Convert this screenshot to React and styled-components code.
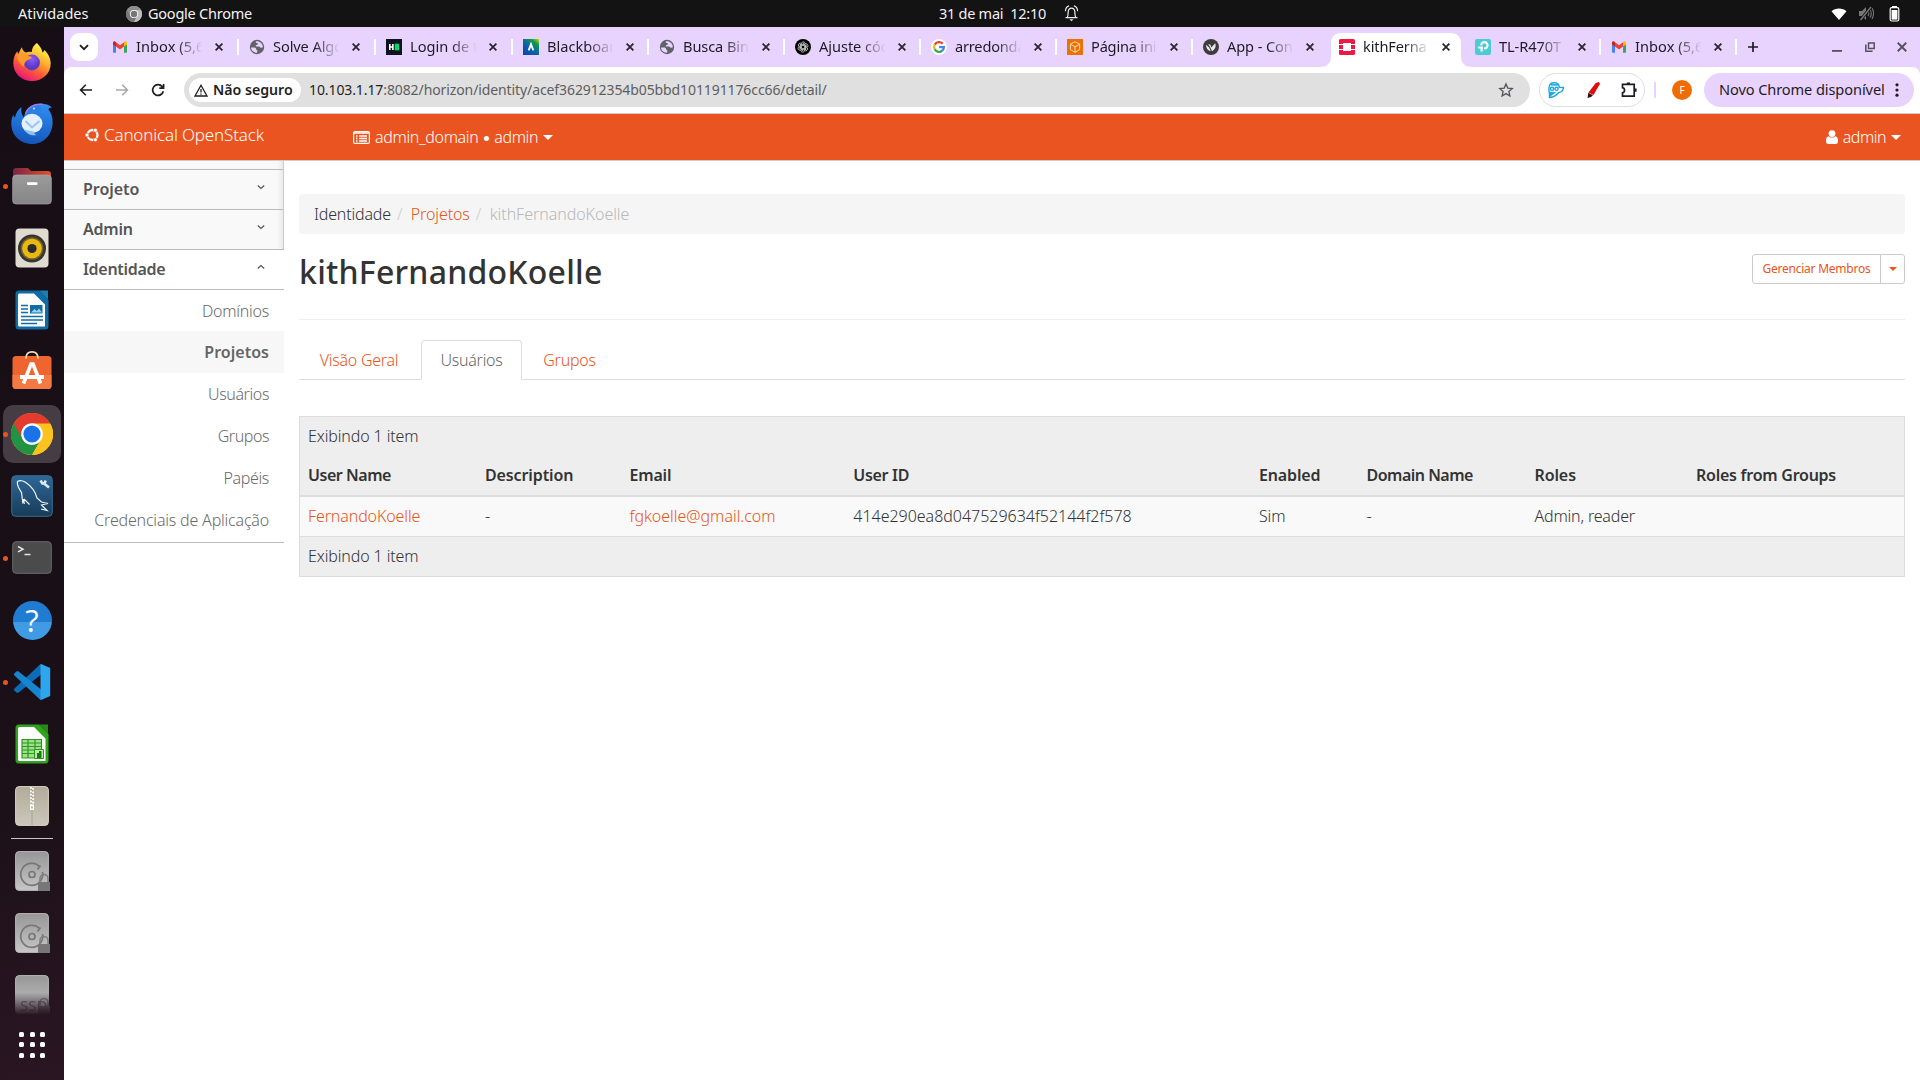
import React from 'react';
import styled, { createGlobalStyle, css } from 'styled-components';

const GlobalStyle = createGlobalStyle`
  *, *::before, *::after { box-sizing: border-box; }
  body { margin: 0; background: #fff; overflow: hidden; }
  body, button { font-family: "Noto Sans", "Open Sans", sans-serif; }
  svg { display: block; flex: none; }
`;

/* ---------- desktop shell ---------- */

const Desktop = styled.div`
  display: flex;
  flex-direction: column;
  width: 1920px;
  height: 1080px;
  overflow: hidden;
`;

const SystemBar = styled.header`
  display: grid;
  grid-template-columns: 1fr auto 1fr;
  align-items: center;
  height: 27px;
  padding: 0 18px;
  background: #131313;
  color: #f2f2f2;
  font-size: 14.5px;
  line-height: 24px;
  white-space: pre;
`;

const SystemLeft = styled.div`
  display: flex;
  align-items: center;
  gap: 6px;
  span { margin-top: -2px; }
`;

const Activities = styled.span`
  width: 102px;
`;

const AppLabel = styled.span`
  letter-spacing: -0.24px;
`;

const Clock = styled.div`
  display: flex;
  align-items: center;
  gap: 18px;
  letter-spacing: -0.26px;
  transform: translateX(48.5px);
  span { margin-top: -2px; }
`;

const Tray = styled.div`
  display: flex;
  align-items: center;
  justify-content: flex-end;
  gap: 12px;
`;

const Body = styled.div`
  display: flex;
  flex: 1;
  min-height: 0;
`;

const Dock = styled.nav`
  display: flex;
  flex-direction: column;
  align-items: center;
  width: 64px;
  padding-top: 4px;
  background: linear-gradient(168deg, #170d14 0%, #190f17 55%, #1d1119 75%, #2a1623 100%);
`;

const DockItem = styled.div`
  display: grid;
  place-items: center;
  position: relative;
  width: 58px;
  height: 58px;
  margin: 2px 0;
  border-radius: 10px;
  background: ${(p) => (p.$active ? '#453d43' : 'transparent')};
  ${(p) =>
    p.$running &&
    css`
      &::before {
        content: '';
        position: absolute;
        left: 0;
        top: 27px;
        width: 5px;
        height: 5px;
        border-radius: 50%;
        background: #e95420;
      }
    `}
`;

const DockDivider = styled.div`
  width: 42px;
  height: 1px;
  margin: 1px 0 1px;
  background: #c9c5c8;
`;

const DockClip = styled.div`
  height: 52px;
  overflow: hidden;
  mask-image: linear-gradient(#000 55%, transparent 98%);
`;

const AppsGrid = styled.div`
  display: grid;
  grid-template-columns: repeat(3, 5px);
  gap: 5.5px;
  margin-top: 15.5px;
`;

const GridDot = styled.i`
  height: 5px;
  border-radius: 1.6px;
  background: #fff;
`;

/* ---------- browser ---------- */

const Browser = styled.div`
  display: flex;
  flex-direction: column;
  flex: 1;
  min-width: 0;
  background: #e8d3ff;
`;

const TabStrip = styled.div`
  display: flex;
  align-items: center;
  height: 40px;
  padding-left: 6px;
  color: #1f1b24;
`;

const TabSearch = styled.button`
  display: grid;
  place-items: center;
  width: 28px;
  height: 28px;
  margin-right: 4px;
  padding: 0;
  border: 0;
  border-radius: 9px;
  background: #fff;
`;

const Tab = styled.div`
  display: flex;
  align-items: center;
  position: relative;
  align-self: stretch;
  width: ${(p) => (p.$wide ? 137 : 136)}px;
  padding-left: 10px;
  ${(p) =>
    p.$separator &&
    css`
      &::after {
        content: '';
        position: absolute;
        right: 0;
        top: 12px;
        width: 2px;
        height: 16px;
        background: #fff;
      }
    `}
`;

const ActiveShape = styled.svg`
  position: absolute;
  left: -8px;
  top: 6px;
`;

const Favicon = styled.span`
  position: relative;
  width: 16px;
  height: 16px;
  flex: none;
`;

const TabTitle = styled.span`
  position: relative;
  width: 68px;
  margin: -2px 11px 0 8px;
  overflow: hidden;
  font-size: 14.6px;
  line-height: 22px;
  letter-spacing: ${(p) => p.$spacing}px;
  white-space: nowrap;
  mask-image: linear-gradient(90deg, #000 60%, transparent 98%);
`;

const CloseMark = styled.svg`
  position: relative;
`;

const NewTab = styled.svg`
  margin-left: 11px;
`;

const WindowButtons = styled.div`
  display: flex;
  align-items: center;
  gap: 22.500px;
  margin-left: auto;
  margin-right: 13px;
`;

const Toolbar = styled.div`
  display: flex;
  align-items: center;
  height: 47px;
  padding: 0 6px 0 14px;
  border-radius: 8px 8px 0 0;
  border-bottom: 1px solid #d0ccd2;
  background: #fff;
`;

const NavButtons = styled.div`
  display: flex;
  gap: 20px;
  width: 106px;
`;

const AddressBar = styled.div`
  display: flex;
  align-items: center;
  width: 1346px;
  height: 34px;
  padding: 0 16px 0 5px;
  border-radius: 17px;
  background: #e0e0e0;
`;

const SecurityChip = styled.div`
  display: flex;
  align-items: center;
  gap: 5px;
  width: 112px;
  height: 24px;
  padding-left: 5px;
  border-radius: 12px;
  background: #fff;
  color: #1f1f1f;
  font-size: 14.2px;
  font-weight: 600;
  letter-spacing: -0.02px;
  line-height: 21px;
  span { margin-top: -2px; }
`;

const Url = styled.div`
  flex: 1;
  margin: -2px 0 0 8px;
  color: #5e5e5e;
  font-size: 14px;
  letter-spacing: -0.1px;
  strong {
    color: #1f1f1f;
    font-weight: 400;
  }
`;

const Extensions = styled.div`
  display: flex;
  align-items: center;
  justify-content: space-between;
  width: 106px;
  height: 34px;
  margin-left: 9px;
  padding: 0 6px 0 7px;
  border: 1px solid #e1dde4;
  border-radius: 17px;
`;

const ToolbarDivider = styled.i`
  width: 2px;
  height: 16px;
  margin: 0 16px 0 9px;
  background: #e8d3ff;
`;

const Avatar = styled.div`
  display: grid;
  place-items: center;
  width: 20px;
  height: 20px;
  border-radius: 50%;
  background: #ef6c00;
  color: #fff;
  font-size: 10px;
`;

const UpdateButton = styled.button`
  display: flex;
  align-items: center;
  justify-content: space-between;
  width: 210px;
  height: 34px;
  margin-left: 12px;
  padding: 0 15px 0 15px;
  border: 0;
  border-radius: 17px;
  background: #e8d3ff;
  color: #1f1b24;
  font-size: 14.6px;
  letter-spacing: -0.1px;
  white-space: nowrap;
  span { margin-top: -2px; }
`;

/* ---------- page ---------- */

const Page = styled.div`
  display: flex;
  flex-direction: column;
  flex: 1;
  min-height: 0;
  background: #fff;
  color: #333;
  font-size: 16px;
  font-weight: 300;
  line-height: 23px;
`;

const Navbar = styled.div`
  display: flex;
  align-items: center;
  height: 47px;
  padding: 0 19px 0 21px;
  border-bottom: 1px solid #ccc;
  background: #e95420;
  color: #fff;
`;

const Brand = styled.div`
  display: flex;
  align-items: center;
  gap: 5px;
  width: 268px;
  margin-top: -5px;
  font-size: 17px;
  letter-spacing: -0.16px;
`;

const NavMenu = styled.div`
  display: flex;
  align-items: center;
  gap: 5px;
  margin-left: ${(p) => (p.$end ? 'auto' : 0)};
  letter-spacing: ${(p) => (p.$end ? -0.5 : -0.35)}px;
  white-space: pre;
`;

const Bullet = styled.b`
  font-family: Inter, sans-serif;
  font-weight: 500;
`;

const Caret = styled.i`
  width: 0;
  border: ${(p) => p.$size}px solid transparent;
  border-top-color: currentColor;
  border-bottom: 0;
`;

const Content = styled.div`
  display: flex;
  flex: 1;
`;

const Sidebar = styled.aside`
  width: 220px;
`;

const shadedPanel = css`
  border-right: 1px solid #ccc;
  background: linear-gradient(270deg, #e9e9e9 0, #f9f9f9 6px);
`;

const SidebarTop = styled.div`
  height: 9px;
  ${shadedPanel}
  border-bottom: 1px solid #bbb;
`;

const SidebarHeading = styled.div`
  display: flex;
  align-items: center;
  justify-content: space-between;
  height: 40px;
  padding: 0 ${(p) => (p.$open ? 19 : 18)}px 0 19px;
  ${(p) => !p.$open && shadedPanel}
  border-bottom: 1px solid #bbb;
  color: #555;
  font-weight: 600;
  letter-spacing: ${(p) => p.$spacing}px;
  svg { margin-top: -6px; }
`;

const SidebarList = styled.ul`
  margin: 0;
  padding: 0;
  list-style: none;
  border-bottom: 1px solid #bbb;
`;

const SidebarItem = styled.li`
  height: 42px;
  padding-right: 15px;
  line-height: 42px;
  text-align: right;
  color: ${(p) => (p.$active ? '#666' : '#6a6a6a')};
  font-weight: ${(p) => (p.$active ? 600 : 300)};
  background: ${(p) => (p.$active ? '#f7f7f7' : 'transparent')};
  letter-spacing: ${(p) => p.$spacing || -0.25}px;
  &:first-child { height: 41px; }
  &:last-child { height: 43px; }
`;

const Main = styled.main`
  flex: 1;
  padding: 33px 15px 0;
`;

const Breadcrumb = styled.div`
  display: flex;
  height: 40px;
  padding-left: 15px;
  border-radius: 4px;
  background: #f5f5f5;
  line-height: 41px;
`;

const Crumb = styled.span`
  color: ${(p) => (p.$link ? '#e95420' : p.$current ? '#b8b8b8' : '#333')};
  letter-spacing: ${(p) => (p.$current ? -0.05 : p.$link ? -0.1 : -0.18)}px;
  &:not(:last-child)::after {
    content: '/';
    padding: 0 8.500px 0 6px;
    color: #ccc;
  }
`;

const TitleRow = styled.div`
  display: flex;
  justify-content: space-between;
  height: 86px;
  padding-top: 20px;
  border-bottom: 1px solid #eee;
`;

const Title = styled.h1`
  margin: -1px 0 0;
  font-size: 32px;
  font-weight: 500;
  line-height: 37px;
  letter-spacing: 0.24px;
`;

const ButtonGroup = styled.div`
  display: flex;
  width: 153px;
  height: 30px;
  border: 1px solid #ccc;
  border-radius: 3px;
  color: #e95420;
  font-size: 12px;
  font-weight: 400;
  line-height: 28px;
`;

const GroupButton = styled.div`
  display: flex;
  align-items: center;
  justify-content: center;
  width: 128px;
  letter-spacing: -0.25px;
  border-right: 1px solid #ccc;
`;

const GroupToggle = styled.div`
  display: grid;
  place-items: center;
  flex: 1;
`;

const Tabs = styled.div`
  display: flex;
  height: 40px;
  margin-top: 20px;
  border-bottom: 1px solid #ddd;
`;

const PageTab = styled.div`
  height: 40px;
  width: ${(p) => p.$width}px;
  margin-right: 2px;
  border: 1px solid ${(p) => (p.$active ? '#ddd' : 'transparent')};
  border-bottom-color: ${(p) => (p.$active ? '#fff' : 'transparent')};
  border-radius: 4px 4px 0 0;
  color: ${(p) => (p.$active ? '#666' : '#e95420')};
  text-align: center;
  line-height: 38px;
  letter-spacing: -0.25px;
`;

const Table = styled.div`
  margin-top: 36px;
  border: 1px solid #ddd;
  background: #eee;
`;

const TableNote = styled.div`
  height: 39px;
  padding-left: 8px;
  line-height: 39px;
  letter-spacing: -0.12px;
`;

const TableRow = styled.div`
  display: grid;
  grid-template-columns: 177px 144.500px 223.800px 405.700px 107.500px 168px 161.500px 1fr;
  height: ${(p) => (p.$head ? 41 : 40)}px;
  padding-left: 8px;
  line-height: 39px;
  ${(p) =>
    p.$head
      ? css`
          border-bottom: 2px solid #ddd;
          font-weight: 600;
        `
      : css`
          border-bottom: 1px solid #ddd;
          background: #f9f9f9;
        `}
`;

const Cell = styled.span`
  color: ${(p) => (p.$link ? '#e95420' : '#333')};
  letter-spacing: ${(p) => p.$spacing || 0}px;
`;

/* ---------- small drawings ---------- */

const CloseIcon = ({ size = 8, stroke = '#2b2530', width = 1.8 }) => (
  <CloseMark width={size} height={size} viewBox="0 0 8 8">
    <path d="M.6.6 7.4 7.4M7.4.6.6 7.4" stroke={stroke} strokeWidth={width} />
  </CloseMark>
);

const Gmail = () => (
  <svg width="16" height="16" viewBox="0 0 16 16">
    <path d="M1 4.5V13a.8.8 0 0 0 .8.8H4V7z" fill="#4285f4" />
    <path d="M15 4.5V13a.8.8 0 0 1-.8.8H12V7z" fill="#34a853" />
    <path d="M12 3.3V7.6l3-2.2V4c0-1.5-1.6-2.2-2.7-1.3z" fill="#fbbc04" />
    <path d="M4 7.6V3.3l4 3 4-3v4.3l-4 3z" fill="#ea4335" />
    <path d="M1 4v1.4l3 2.2V3.3l-.7-.6C2.300 1.800 1 2.500 1 4z" fill="#c5221f" />
  </svg>
);

const Globe = () => (
  <svg width="16" height="16" viewBox="0 0 16 16">
    <circle cx="8" cy="8" r="7.200" fill="#5f6368" />
    <path d="M2 8.600c2 0 2.600-.6 4.300.2 1.200.8.3 1.700 1.400 2.100 1 .3.800 1 .3 2.800C4.700 13.900 2.100 11.700 2 8.600zM6.800 2.300c-.2 1.500.3 1.800 1.600 1.900 1.200.2.300 1.500-.6 1.700-1.300.2-1.500 1.500-.2 1.700 1.600.1 2.500-.3 3.500.6.900.9 1.900.3 2.700.1.300-3.800-3.500-6.700-7-6z" fill="#e8d3ff" />
  </svg>
);

const HackerRank = () => (
  <svg width="16" height="16" viewBox="0 0 16 16">
    <path fill="#0e141e" d="M0 0h16v16H0z" />
    <path fill="#fff" d="M3 5h1.600v2.200h1.500V5h1.600v6H6.100V8.700H4.600V11H3z" />
    <path fill="#05d96f" d="M8.700 4.700h4.500v6.600H8.700z" />
  </svg>
);

const Blackboard = () => (
  <svg width="16" height="16" viewBox="0 0 16 16">
    <defs>
      <linearGradient id="bb" x1="1" y1="0" x2=".2" y2="1">
        <stop offset="0" stopColor="#c8dc10" />
        <stop offset=".25" stopColor="#109a48" />
        <stop offset=".6" stopColor="#0a63a8" />
        <stop offset="1" stopColor="#0a48b0" />
      </linearGradient>
    </defs>
    <path fill="url(#bb)" d="M0 0h16v16H0z" />
    <path d="M5.700 11.300 8 5.200l2.300 6.100" fill="none" stroke="#fff" strokeWidth="1.900" />
  </svg>
);

const OpenAI = () => (
  <svg width="16" height="16" viewBox="0 0 16 16">
    <circle cx="8" cy="8" r="8" fill="#000" />
    <g fill="none" stroke="#ddd" strokeWidth=".8">
      {[0, 60, 120, 180, 240, 300].map((a) => (
        <path key={a} transform={`rotate(${a} 8 8)`} d="M6.300 8.900V5a2.100 2.100 0 0 1 3.900-1.100M6.300 5.900l3.200-1.800" />
      ))}
    </g>
  </svg>
);

const Google = () => (
  <svg width="16" height="16" viewBox="0 0 16 16">
    <circle cx="8" cy="8" r="8" fill="#fff" />
    <g fill="none" strokeWidth="2.300">
      <path d="M11.700 4.800A4.900 4.900 0 0 0 3.700 5.700" stroke="#ea4335" />
      <path d="M3.800 5.500a4.900 4.900 0 0 0 0 5" stroke="#fbbc05" />
      <path d="M3.700 10.300a4.900 4.900 0 0 0 7.600 1.300" stroke="#34a853" />
      <path d="M11.200 11.700a4.600 4.600 0 0 0 1.700-3.500H8.100" stroke="#4285f4" />
    </g>
  </svg>
);

const Cube = () => (
  <svg width="16" height="16" viewBox="0 0 16 16">
    <path fill="#ed7100" d="M0 0h16v16H0z" />
    <path d="M8 2.700 12.600 5.200v5.500L8 13.300 3.400 10.700V5.200zM3.400 5.200 8 7.800l4.600-2.600M8 7.800v5.500" fill="none" stroke="#ffe5cc" strokeWidth=".9" />
  </svg>
);

const Katalon = () => (
  <svg width="16" height="16" viewBox="0 0 16 16">
    <circle cx="8" cy="8" r="8" fill="#3c3c3c" />
    <path d="M3 5.800 6.200 8.500l1.500 3.700C5 11.800 3 9.500 3 5.800zM5.200 5 7.500 5.800l.8 2.700 3.900-4.300c1.300 3-.2 6.500-3.200 8L7.300 8.500z" fill="#e8e8e8" />
  </svg>
);

const OpenStackMark = () => (
  <svg width="16" height="16" viewBox="0 0 16 16">
    <path fill="#ed1944" d="M1.500 0h13A1.500 1.500 0 0 1 16 1.500V5h-4V4H4v1H0V1.500A1.500 1.500 0 0 1 1.500 0zM0 6h4v4H0zM12 6h4v4h-4zM0 11h4v1h8v-1h4v3.500a1.500 1.500 0 0 1-1.500 1.500h-13A1.500 1.500 0 0 1 0 14.500z" />
  </svg>
);

const TpLink = () => (
  <svg width="16" height="16" viewBox="0 0 16 16">
    <rect width="16" height="16" rx="2" fill="#4acbd6" />
    <path d="M3.200 8.500H8M6.200 6.200a3.200 3.200 0 1 1 3.100 3.300H9M6.600 8v4.600" fill="none" stroke="#fff" strokeWidth="2.100" />
  </svg>
);

const ChromeDisc = ({ size, mono }) => {
  const [r, y, g, b] = mono ? ['#8d8d8d', '#bdbdbd', '#777', '#777'] : ['#e33b2e', '#fcc31e', '#229342', '#1a73e8'];
  return (
    <svg width={size} height={size} viewBox="0 0 42 42">
      <circle cx="21" cy="21" r="21" fill={y} />
      <path d="M21 21 2.800 10.500A21 21 0 0 0 21 42l9.100-15.800z" fill={g} />
      <path d="M21 42 30.100 26.200 39.200 10.500A21 21 0 0 1 21 42z" fill={y} />
      <path d="M21 10.500h18.200a21 21 0 0 0-36.400 0L11.900 26.200z" fill={r} />
      <circle cx="21" cy="21" r="10.800" fill="#fff" />
      <circle cx="21" cy="21" r="8.600" fill={b} />
    </svg>
  );
};

const Bell = () => (
  <svg width="14" height="17" viewBox="0 0 14 17" fill="none" stroke="#eee" strokeWidth="1.200">
    <path d="M1 12.600h12M2.700 12.400c1.200-1.700.7-3.800 1-5.900C4 4.300 5.200 3.200 7 3.200s3 1.100 3.300 3.300c.3 2.100-.2 4.200 1 5.900M.9 6.300C1 3.300 2.300 1.300 4.600.800M13.100 6.300c-.1-3-1.400-5-3.700-5.500" />
    <path d="M5 14.200h4L7 16.200z" fill="#eee" stroke="none" />
  </svg>
);

/* ---------- dock drawings ---------- */

const Firefox = () => (
  <svg width="40" height="40" viewBox="0 0 40 40">
    <defs>
      <linearGradient id="ff" x1=".8" y1=".1" x2=".3" y2="1">
        <stop offset="0" stopColor="#fff44f" />
        <stop offset=".35" stopColor="#ffb02e" />
        <stop offset=".65" stopColor="#ff5a36" />
        <stop offset="1" stopColor="#e3127e" />
      </linearGradient>
      <radialGradient id="ffg" cx=".5" cy=".3">
        <stop offset="0" stopColor="#9059ff" />
        <stop offset="1" stopColor="#5b3bc4" />
      </radialGradient>
    </defs>
    <path d="M25 1c3 3.500 5 6 5.500 9.500 1-.3 1.500-1.500 1.800-2.500C36 11.500 38.700 16 38.700 21.500 38.700 31.500 30.500 39 20 39S1.300 31.500 1.300 21c0-5 1.700-9 4-11.700l.8 3C7.500 9.500 9 6.500 9.800 5.200c.6 2.500 2 4.300 4.200 5.300 2-.8 4-.9 6-.5C19.700 6 22 3 25 1z" fill="url(#ff)" />
    <circle cx="20" cy="20.500" r="7.900" fill="url(#ffg)" />
    <path d="M5.500 12.500c3-2 6-1.800 8.500-.3 1.800 1.500 3.500 2 6 2.800-1 2.500-4 2.500-5.500 3.800-1.500 1.600-3 3.200-2.500 6C8.500 23 4.500 18 5.500 12.500z" fill="#ff9a2e" />
  </svg>
);

const Thunderbird = () => (
  <svg width="44" height="44" viewBox="0 0 44 44">
    <defs>
      <linearGradient id="tb" x1=".5" y1="0" x2=".3" y2="1">
        <stop offset="0" stopColor="#2f8cf0" />
        <stop offset="1" stopColor="#1353b8" />
      </linearGradient>
    </defs>
    <path d="M42 5.500c-3 .4-3.700 1.200-3.500 2 2.700 3.500 4.400 8 4.100 13.500C42.200 33 33.500 42 22.500 42 10 42 1 33 1.300 21c0-2.800.8-6 2-8.500.3 1.800.8 2.500 1.600 3C6 11 8.200 7.300 11.500 5c-.7 4.500 0 7.500 2.500 10.500L20 11C22 5 26.500 1.500 31.500 1.800c4 .2 7.500.8 10.500 3.700z" fill="url(#tb)" />
    <path d="M14 15.500C15 7 20 2 31.500 1.800L30 12z" fill="#2b80e4" />
    <path d="M15.500 11.500C18.500 5 25 1.500 33 2.500" fill="none" stroke="#9a7bea" strokeWidth="1.400" />
    <ellipse cx="22" cy="21.500" rx="10.500" ry="9.700" fill="#e3f0fd" />
    <path d="M14 27.500c3 5 8 6.500 12.500 5.500-2-1-2.800-2-3-3.500z" fill="#8fc3f8" />
    <path d="M15.500 19 22 25.500l7.500-6.500" fill="none" stroke="#9cc3ec" strokeWidth="1.800" />
    <circle cx="24" cy="6.500" r="1" fill="#cfe4ff" />
  </svg>
);

const Files = () => (
  <svg width="40" height="38" viewBox="0 0 40 38">
    <defs>
      <linearGradient id="fo">
        <stop offset="0" stopColor="#7a2545" />
        <stop offset="1" stopColor="#e2502a" />
      </linearGradient>
      <linearGradient id="fg" x2="0" y2="1">
        <stop offset="0" stopColor="#9b9b9b" />
        <stop offset="1" stopColor="#858585" />
      </linearGradient>
    </defs>
    <path d="M1 4a3 3 0 0 1 3-3h12l3 3h17a3 3 0 0 1 3 3v10H1z" fill="url(#fo)" />
    <rect x=".6" y="8" width="38.800" height="29" rx="3.500" fill="url(#fg)" stroke="#ababab" strokeWidth=".6" />
    <rect x="15" y="15.300" width="10.500" height="2.600" rx=".8" fill="#fff" />
  </svg>
);

const Speaker = () => (
  <svg width="34" height="40" viewBox="0 0 34 40">
    <rect x=".5" y=".5" width="33" height="39" rx="4" fill="#dfdbd0" />
    <circle cx="17" cy="20.500" r="14" fill="#36352f" />
    <circle cx="17" cy="20.500" r="11.300" fill="#77622a" />
    <circle cx="17" cy="20.500" r="9.800" fill="#e9b912" />
    <circle cx="17" cy="20.500" r="4.600" fill="#2b2b2b" />
  </svg>
);

const Writer = () => (
  <svg width="34" height="40" viewBox="0 0 34 40">
    <path d="M4 .5h20L33.500 10v26a3.500 3.500 0 0 1-3.500 3.500H4A3.500 3.500 0 0 1 .5 36V4A3.500 3.500 0 0 1 4 .5z" fill="#0f6ca5" />
    <path d="M4.500 3.500H19L30 14.500V36.500H4.500A1.500 1.500 0 0 1 3 35V5a1.500 1.500 0 0 1 1.500-1.500z" fill="#fff" />
    <path d="M24 .5h9v9z" fill="#1b7fb5" />
    <path d="M6 15.500h7M6 19h7M6 22.500h7M6 26.500h22M6 30h22M6 33.500h16" stroke="#0f6ca5" strokeWidth="1.500" />
    <path d="M15 15h12.500v8.500H15z" fill="#0f6ca5" />
    <path d="m16 22.500 3.500-3.500 2.500 2 2-2.500 3 4z" fill="#9fd0ee" />
  </svg>
);

const Software = () => (
  <svg width="40" height="45" viewBox="0 0 40 45">
    <rect x=".5" y="6" width="39" height="33" rx="3.500" fill="#f0642f" />
    <path d="M.5 25h39v10.500a3.500 3.500 0 0 1-3.500 3.500H4a3.500 3.500 0 0 1-3.500-3.500z" fill="#f47a45" />
    <path d="M14 8.500C14 4 16.300 1.800 20 1.800S26 4 26 8.500" fill="none" stroke="#f6dcae" strokeWidth="1.800" />
    <path d="M11.500 33.500 19 14h2l7.500 19.500" fill="none" stroke="#fff" strokeWidth="3.600" />
    <path d="M8 27h24" stroke="#fff" strokeWidth="4" />
  </svg>
);

const Workbench = () => (
  <svg width="42" height="42" viewBox="0 0 42 42">
    <defs>
      <linearGradient id="wb" x2="0" y2="1">
        <stop offset="0" stopColor="#2f6797" />
        <stop offset="1" stopColor="#173c59" />
      </linearGradient>
    </defs>
    <rect x=".7" y=".7" width="40.600" height="40.600" rx="4" fill="url(#wb)" stroke="#3b6a90" />
    <path d="M6.500 6.500c2-1.500 6-1 9 1.500 6 4 9 9.500 10.500 15l4.500 4 6.500 1.500-6.500 1.500 5.500 5.500-6-1.500M6.500 6.500c-1 4 2 8 4 11l1.300 10 1.700-3 5 5M12.500 24l.8 5" fill="none" stroke="#eef5fa" strokeWidth="1.200" />
    <path d="m29.500 5.500 2 3 2.200-.5 1-2.500M33 8.500l5 4" fill="none" stroke="#dce9f2" strokeWidth="2.600" />
  </svg>
);

const Terminal = () => (
  <svg width="40" height="34" viewBox="0 0 40 34">
    <rect x=".7" y=".7" width="38.600" height="31.600" rx="3.500" fill="#4b4b4b" stroke="#6b6b6b" />
    <path d="m6 5.500 5 2.700-5 2.700M12.500 13.500h6" fill="none" stroke="#e6e6e6" strokeWidth="1.500" />
  </svg>
);

const HelpDisc = styled.div`
  display: grid;
  place-items: center;
  width: 39px;
  height: 39px;
  border-radius: 50%;
  background: linear-gradient(#1f7cd0 0 54%, #3f9be3 55%);
  color: #fff;
  font: 400 31px/37px "Open Sans", sans-serif;
`;

const VsCode = () => (
  <svg width="38" height="38" viewBox="0 0 38 38">
    <path d="M27.500 1 1.500 25.500c-.7.700-.7 1.500 0 2.200L3.500 29.500c.7.500 1.400.5 2.100 0L30 10z" fill="#0b6cb8" />
    <path d="M27.500 37 1.500 12.500c-.7-.7-.7-1.500 0-2.200L3.500 8.500c.7-.5 1.400-.5 2.100 0L30 28z" fill="#1686d0" />
    <path d="M27.500.8 37.200 5v28l-9.700 4.200z" fill="#2ea6ee" />
  </svg>
);

const Calc = () => (
  <svg width="34" height="40" viewBox="0 0 34 40">
    <path d="M4 .5h20L33.500 10v26a3.500 3.500 0 0 1-3.500 3.500H4A3.500 3.500 0 0 1 .5 36V4A3.500 3.500 0 0 1 4 .5z" fill="#2ea31c" />
    <path d="M4.500 3H19L30.500 14.500V37H4.500A1.500 1.500 0 0 1 3 35.500v-31A1.500 1.500 0 0 1 4.500 3z" fill="#fff" />
    <path d="M24 .5h9v9z" fill="#268a18" />
    <path d="M7 15.500h19.500V34H7z" fill="#9fdf8e" />
    <path d="M7 15.500h19.500V34H7zM7 19h19.500M7 22.500h19.500M7 26h19.500M7 29.500h19.500M13 15.500V34M20 15.500V34" fill="none" stroke="#2a9a1a" strokeWidth="1.200" />
    <path d="M19.500 25.500h9v9h-9z" fill="#b8ecaa" stroke="#2a9a1a" />
    <path d="M22 34v-5h2v-2h2.500v7z" fill="#1c7a10" />
  </svg>
);

const Archive = () => (
  <svg width="34" height="40" viewBox="0 0 34 40">
    <defs>
      <linearGradient id="az" x2="0" y2="1">
        <stop offset="0" stopColor="#b3ab9a" />
        <stop offset="1" stopColor="#cbc7ba" />
      </linearGradient>
    </defs>
    <rect x=".6" y=".6" width="32.800" height="38.800" rx="3.500" fill="url(#az)" stroke="#d8d4c8" />
    <path d="M17 1v38" stroke="#a39c8c" strokeWidth=".8" />
    <path d="M15.900 1v18M18.100 2v17" stroke="#fff" strokeWidth="1.800" strokeDasharray="1.800 1.600" />
    <path d="M15 18.500h4V24h-4z" fill="#fff" />
    <path d="M16.300 20.500h1.400v2h-1.400z" fill="#999" />
  </svg>
);

const DriveLabel = styled.div`
  position: absolute;
  left: 5px;
  top: 22px;
  color: #6e6e6e;
  font: 400 15px/16px "Noto Sans", sans-serif;
`;

const DriveBox = styled.div`
  position: relative;
  width: 36px;
  height: 40px;
  margin-left: 2px;
`;

const Drive = ({ label }) => (
  <DriveBox>
    <svg width="36" height="40" viewBox="0 0 36 40">
      <defs>
        <linearGradient id="dr" x2="0" y2="1">
          <stop offset="0" stopColor="#979797" />
          <stop offset="1" stopColor="#c6c6c6" />
        </linearGradient>
      </defs>
      <rect x=".6" y=".6" width="32.800" height="38.800" rx="3.500" fill="url(#dr)" stroke="#b8b8b8" />
      {!label && (
        <g fill="none" stroke="#777" strokeWidth="1.700">
          <path d="M24.500 15.500A11 11 0 1 0 27.500 21" />
          <circle cx="17" cy="23.500" r="3" />
          <path d="m22.500 18.500 3-4" />
        </g>
      )}
      <path d="M25 32v-4.500a4 4 0 0 1 8 0V32" fill="none" stroke="#808080" strokeWidth="1.600" />
      <path d="M23 31h12v9H23z" fill="#777" />
    </svg>
    {label && <DriveLabel>{label}</DriveLabel>}
  </DriveBox>
);

/* ---------- data ---------- */

const browserTabs = [
  { title: 'Inbox (5,6', icon: Gmail, sep: true, spacing: 0.05, wide: true },
  { title: 'Solve Algo', icon: Globe, sep: true, spacing: -0.1, wide: true },
  { title: 'Login de t', icon: HackerRank, sep: true, spacing: 0, wide: true },
  { title: 'Blackboar', icon: Blackboard, sep: true, spacing: 0 },
  { title: 'Busca Bin', icon: Globe, sep: true, spacing: -0.1 },
  { title: 'Ajuste cód', icon: OpenAI, sep: true, spacing: -0.05 },
  { title: 'arredonda', icon: Google, sep: true, spacing: -0.2 },
  { title: 'Página ini', icon: Cube, sep: true, spacing: -0.2 },
  { title: 'App - Con', icon: Katalon, spacing: -0.1 },
  { title: 'kithFerna', icon: OpenStackMark, active: true, spacing: -0.15 },
  { title: 'TL-R470T', icon: TpLink, sep: true, spacing: -0.1 },
  { title: 'Inbox (5,6', icon: Gmail, sep: true, spacing: 0.05 },
];

const dockApps = [
  { icon: <Firefox /> },
  { icon: <Thunderbird /> },
  { icon: <Files />, running: true },
  { icon: <Speaker /> },
  { icon: <Writer /> },
  { icon: <Software /> },
  { icon: <ChromeDisc size={42} />, running: true, active: true },
  { icon: <Workbench /> },
  { icon: <Terminal />, running: true },
  { icon: <HelpDisc>?</HelpDisc> },
  { icon: <VsCode />, running: true },
  { icon: <Calc /> },
  { icon: <Archive /> },
];

const menu = [
  { label: 'Domínios' },
  { label: 'Projetos', active: true, spacing: 0.02 },
  { label: 'Usuários', spacing: -0.4 },
  { label: 'Grupos', spacing: -0.45 },
  { label: 'Papéis', spacing: -0.35 },
  { label: 'Credenciais de Aplicação', spacing: -0.19 },
];

const columns = [
  ['User Name', -0.45],
  ['Description', -0.12],
  ['Email', -0.2],
  ['User ID', -0.3],
  ['Enabled', -0.15],
  ['Domain Name', -0.5],
  ['Roles', -0.1],
  ['Roles from Groups', -0.25],
];

const userRow = [
  { text: 'FernandoKoelle', link: true, spacing: -0.12 },
  { text: '-' },
  { text: 'fgkoelle@gmail.com', link: true, spacing: -0.02 },
  { text: '414e290ea8d047529634f52144f2f578', spacing: -0.02 },
  { text: 'Sim', spacing: -0.1 },
  { text: '-' },
  { text: 'Admin, reader', spacing: -0.18 },
  { text: '' },
];

const Chevron = ({ up }) => (
  <svg width="8" height="6" viewBox="0 0 8 6">
    <path d={up ? 'M.8 4.500 4 1.500l3.200 3' : 'M.8 1.500 4 4.500l3.200-3'} fill="none" stroke="#555" strokeWidth="1.200" />
  </svg>
);

export default function App() {
  return (
    <Desktop>
      <GlobalStyle />
      <SystemBar>
        <SystemLeft>
          <Activities>Atividades</Activities>
          <ChromeDisc size={16} mono />
          <AppLabel>Google Chrome</AppLabel>
        </SystemLeft>
        <Clock>
          <span>31 de mai  12:10</span>
          <Bell />
        </Clock>
        <Tray>
          <svg width="16" height="12" viewBox="0 0 16 12">
            <path d="M.5 3.200C4.500-.4 11.500-.4 15.500 3.200L8 12z" fill="#fff" />
          </svg>
          <svg width="15" height="15" viewBox="0 0 15 15" fill="none" stroke="#777">
            <path d="M0 5h3l4-4v13l-4-4H0z" fill="#777" stroke="none" />
            <path d="M9 5c1 1.500 1 3.500 0 5M11 3.500c1.600 2.500 1.600 5.500 0 8M13 2c2 3.500 2 7.500 0 11" strokeWidth="1.100" />
            <path d="M1.500 14 12 1" stroke="#131313" strokeWidth="3" />
            <path d="M1.500 14 12 1" strokeWidth="1.400" />
          </svg>
          <svg width="16" height="16" viewBox="0 0 16 16">
            <path d="M6 0h5v2H6z" fill="#fff" />
            <rect x="4.200" y="1.700" width="8.600" height="13.300" rx="1.500" fill="none" stroke="#fff" strokeWidth="1.200" />
            <path d="M5.600 4h5.800v9.600H5.600z" fill="#fff" />
          </svg>
        </Tray>
      </SystemBar>
      <Body>
        <Dock>
          {dockApps.map((d, i) => (
            <DockItem key={i} $running={d.running} $active={d.active}>
              {d.icon}
            </DockItem>
          ))}
          <DockDivider />
          <DockItem><Drive /></DockItem>
          <DockItem><Drive /></DockItem>
          <DockClip>
            <DockItem><Drive label="SSD" /></DockItem>
          </DockClip>
          <AppsGrid>
            {Array.from({ length: 9 }, (_, i) => <GridDot key={i} />)}
          </AppsGrid>
        </Dock>
        <Browser>
          <TabStrip>
            <TabSearch>
              <svg width="10" height="7" viewBox="0 0 10 7">
                <path d="m1 1.200 4 4 4-4" fill="none" stroke="#1f1f1f" strokeWidth="1.900" />
              </svg>
            </TabSearch>
            {browserTabs.map(({ title, icon: Icon, sep, active, spacing, wide }, i) => (
              <Tab key={i} $separator={sep} $wide={wide}>
                {active && (
                  <ActiveShape width="150" height="34" viewBox="0 0 150 34">
                    <path d="M0 34c6 0 10-4 10-10V10C10 4 14 0 20 0h110c6 0 10 4 10 10v14c0 6 4 10 10 10z" fill="#fff" />
                  </ActiveShape>
                )}
                <Favicon><Icon /></Favicon>
                <TabTitle $spacing={spacing}>{title}</TabTitle>
                <CloseIcon />
              </Tab>
            ))}
            <NewTab width="10" height="10" viewBox="0 0 10 10">
              <path d="M5 0v10M0 5h10" stroke="#1f1b24" strokeWidth="1.700" />
            </NewTab>
            <WindowButtons>
              <svg width="10" height="10" viewBox="0 0 10 10"><path d="M0 8.900h10" stroke="#55505c" strokeWidth="1.800" /></svg>
              <svg width="10" height="10" viewBox="0 0 10 10" fill="none" stroke="#55505c" strokeWidth="1.500">
                <path d="M3.500 1h5.700v5.500H3.500zM.8 2.500v6.700h6.800" />
              </svg>
              <CloseIcon size={10} stroke="#55505c" width={1.500} />
            </WindowButtons>
          </TabStrip>
          <Toolbar>
            <NavButtons>
              <svg width="16" height="16" viewBox="0 0 16 16" fill="none" stroke="#1f1f1f" strokeWidth="1.600"><path d="M14 8H3M7.800 2.800 2.600 8l5.200 5.200" /></svg>
              <svg width="16" height="16" viewBox="0 0 16 16" fill="none" stroke="#a8a8a8" strokeWidth="1.600"><path d="M2 8h11M8.200 2.800 13.400 8l-5.200 5.200" /></svg>
              <svg width="16" height="16" viewBox="0 0 16 16" fill="none" stroke="#1f1f1f" strokeWidth="1.700"><path d="M13.300 9.200A5.400 5.400 0 1 1 12.200 4.600L13.500 6M13.600 1.900V6.200H9.300" /></svg>
            </NavButtons>
            <AddressBar>
              <SecurityChip>
                <svg width="14" height="13" viewBox="0 0 14 13" fill="none" stroke="#1f1f1f" strokeWidth="1.300"><path d="M7 1.300 13 12H1zM7 5v3.600M7 9.400v1.300" /></svg>
                <span>Não seguro</span>
              </SecurityChip>
              <Url><strong>10.103.1.17</strong>:8082/horizon/identity/acef362912354b05bbd101191176cc66/detail/</Url>
              <svg width="16" height="16" viewBox="0 0 16 16"><path d="m8 1.900 1.800 4.200 4.500.4-3.400 3 1 4.500L8 11.600 4.100 14l1-4.500-3.400-3 4.500-.4z" fill="none" stroke="#55555a" strokeWidth="1.300" /></svg>
            </AddressBar>
            <Extensions>
              <svg width="18" height="18" viewBox="0 0 18 18" fill="#fff" stroke="#1da5e0" strokeWidth="1.400">
                <path d="M2 6.500C2.500 3 5 1.500 8 1.800c2.500.2 4 1.700 4.300 4.500L16.500 6.500c-.3 3-2 4.700-4.700 5-2 2.700-5 4.500-9.300 5C3 13 1.600 10.500 2 6.500z" />
                <path d="M4 3.900h7" strokeWidth="1.600" /><path d="M2.800 11.300h5.700l-5.500 4z" fill="#1da5e0" strokeWidth=".8" /><circle cx="5" cy="7.800" r="1.600" /><circle cx="9.500" cy="7.800" r="1.600" />
              </svg>
              <svg width="16" height="18" viewBox="0 0 16 18"><path d="M10.500 2.300 13.500 1c1 .4 1.600 1.200 1.200 2.300L8.500 14l-5-2.500z" fill="#e30a0a" /><path d="m3.300 11.800 4.700 2.400-2 1.700-3.500 1z" fill="#3a0f0f" /></svg>
              <svg width="18" height="18" viewBox="0 0 18 18" fill="none" stroke="#1f1b24" strokeWidth="1.700"><path d="M2.500 3.300h11.700v11.900H2.500v-3.300c2.700-.5 2.700-4.700 0-5.200z" /><path d="M6.800 2.800h3.200M15.300 7.600v3.200" strokeWidth="2.600" /></svg>
            </Extensions>
            <ToolbarDivider />
            <Avatar>F</Avatar>
            <UpdateButton>
              <span>Novo Chrome disponível</span>
              <svg width="4" height="14" viewBox="0 0 4 14" fill="#1f1b24"><circle cx="2" cy="1.800" r="1.600" /><circle cx="2" cy="7" r="1.600" /><circle cx="2" cy="12.200" r="1.600" /></svg>
            </UpdateButton>
          </Toolbar>
          <Page>
            <Navbar>
              <Brand>
                <svg width="14" height="14" viewBox="0 0 14 14">
                  <circle cx="7.500" cy="7" r="5" fill="none" stroke="#fff" strokeWidth="2.300" />
                  <g fill="#fff" stroke="#e95420" strokeWidth=".7"><circle cx="2" cy="7" r="2" /><circle cx="10.400" cy="2.200" r="2" /><circle cx="10.400" cy="11.800" r="2" /></g>
                </svg>
                Canonical OpenStack
              </Brand>
              <NavMenu>
                <svg width="17" height="13" viewBox="0 0 17 13"><rect x=".6" y=".6" width="15.800" height="11.800" rx="1.500" fill="none" stroke="#fff" strokeWidth="1.200" /><path d="M1 2h15M3 5h1.500M6 5h8M3 7.500h1.500M6 7.500h8M3 10h1.500M6 10h8" stroke="#fff" strokeWidth="1.300" /></svg>
                <span>admin_domain <Bullet>•</Bullet> admin</span>
                <Caret $size={5} />
              </NavMenu>
              <NavMenu $end>
                <svg width="12" height="14" viewBox="0 0 12 14" fill="#fff"><circle cx="6" cy="3.600" r="3.400" /><path d="M2.700 6.300C1 6.500 0 8 0 11c0 2 .8 3 2.300 3h7.400C11.200 14 12 13 12 11c0-3-1-4.500-2.700-4.700C8 8 4 8 2.700 6.300z" /></svg>
                admin
                <Caret $size={5} />
              </NavMenu>
            </Navbar>
            <Content>
              <Sidebar>
                <SidebarTop />
                <SidebarHeading $spacing={-0.04}>Projeto<Chevron /></SidebarHeading>
                <SidebarHeading $spacing={-0.2}>Admin<Chevron /></SidebarHeading>
                <SidebarHeading $open $spacing={-0.3}>Identidade<Chevron up /></SidebarHeading>
                <SidebarList>
                  {menu.map((m) => (
                    <SidebarItem key={m.label} $active={m.active} $spacing={m.spacing}>{m.label}</SidebarItem>
                  ))}
                </SidebarList>
              </Sidebar>
              <Main>
                <Breadcrumb>
                  <Crumb>Identidade</Crumb>
                  <Crumb $link>Projetos</Crumb>
                  <Crumb $current>kithFernandoKoelle</Crumb>
                </Breadcrumb>
                <TitleRow>
                  <Title>kithFernandoKoelle</Title>
                  <ButtonGroup>
                    <GroupButton>Gerenciar Membros</GroupButton>
                    <GroupToggle><Caret $size={4} /></GroupToggle>
                  </ButtonGroup>
                </TitleRow>
                <Tabs>
                  <PageTab $width={120}>Visão Geral</PageTab>
                  <PageTab $width={101} $active>Usuários</PageTab>
                  <PageTab $width={91}>Grupos</PageTab>
                </Tabs>
                <Table>
                  <TableNote>Exibindo 1 item</TableNote>
                  <TableRow $head>
                    {columns.map(([c, s]) => <Cell key={c} $spacing={s}>{c}</Cell>)}
                  </TableRow>
                  <TableRow>
                    {userRow.map((c, i) => <Cell key={i} $link={c.link} $spacing={c.spacing}>{c.text}</Cell>)}
                  </TableRow>
                  <TableNote>Exibindo 1 item</TableNote>
                </Table>
              </Main>
            </Content>
          </Page>
        </Browser>
      </Body>
    </Desktop>
  );
}
